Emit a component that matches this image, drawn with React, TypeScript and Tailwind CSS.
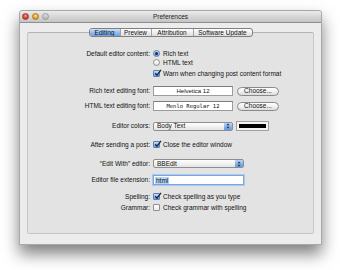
import React from "react";

const font = { fontFamily: '"Liberation Sans", Arial, sans-serif' };

function Radio({ on }: { on?: boolean }) {
  return (
    <span
      className={
        "inline-flex items-center justify-center w-[7px] h-[7px] rounded-full border shrink-0 " +
        (on
          ? "border-[#5a7fb8] bg-gradient-to-b from-[#c9defa] to-[#6b9fe0]"
          : "border-[#8e8e8e] bg-gradient-to-b from-[#ffffff] to-[#e6e6e6]")
      }
    >
      {on && <span className="w-[3px] h-[3px] rounded-full bg-[#1c2a44]" />}
    </span>
  );
}

function Check({ on }: { on?: boolean }) {
  return (
    <span
      className={
        "relative inline-flex items-center justify-center w-[7px] h-[7px] rounded-[1px] border shrink-0 " +
        (on
          ? "border-[#5a7fb8] bg-gradient-to-b from-[#c9defa] to-[#6b9fe0]"
          : "border-[#8e8e8e] bg-gradient-to-b from-[#ffffff] to-[#ececec]")
      }
    >
      {on && (
        <svg width="8" height="8" viewBox="0 0 8 8" className="absolute left-[0px] top-[-2px]">
          <path d="M1.2 4.2 L3 6.2 L7 0.8" stroke="#1a2536" strokeWidth="1.3" fill="none" />
        </svg>
      )}
    </span>
  );
}

function Field({ children, mono, w = "w-[80px]" }: { children?: React.ReactNode; mono?: boolean; w?: string }) {
  return (
    <div
      className={
        w +
        " h-[10px] bg-white border border-[#9c9c9c] border-t-[#7d7d7d] flex items-center justify-center text-[6px] text-[#111]"
      }
      style={mono ? { fontFamily: '"DejaVu Sans Mono", "Liberation Mono", monospace', fontSize: "5.5px" } : undefined}
    >
      {children}
    </div>
  );
}

function Button({ label }: { label: string }) {
  return (
    <div className="ml-[2px] w-[42px] h-[9px] rounded-full border border-[#8a8a8a] bg-gradient-to-b from-[#ffffff] via-[#f1f1f1] to-[#dcdcdc] flex items-center justify-center text-[6.5px] text-[#111]">
      {label}
    </div>
  );
}

function Popup({ label, w }: { label: string; w: string }) {
  return (
    <div className={w + " h-[9px] rounded-[2px] border border-[#8e8e8e] bg-gradient-to-b from-[#ffffff] to-[#e4e4e4] flex items-stretch"}>
      <div className="flex-1 flex items-center pl-[3px] text-[6.5px] text-[#111]">{label}</div>
      <div className="w-[8px] rounded-r-[1px] bg-gradient-to-b from-[#b9d4f7] to-[#5f97de] flex items-center justify-center">
        <svg width="4" height="6" viewBox="0 0 4 6">
          <path d="M0.5 2.3 L2 0.6 L3.5 2.3 Z M0.5 3.7 L2 5.4 L3.5 3.7 Z" fill="#1b2a45" />
        </svg>
      </div>
    </div>
  );
}

function Row({ label, children, h = "h-[9px]", mt }: { label?: string; children: React.ReactNode; h?: string; mt: string }) {
  return (
    <div className={"grid grid-cols-[122px_1fr] gap-x-[3px] items-center " + h + " " + mt}>
      <div className="text-right text-[6.5px] text-[#111] whitespace-nowrap">{label}</div>
      <div className="flex items-center gap-[2px] text-[6.5px] text-[#111] whitespace-nowrap">{children}</div>
    </div>
  );
}

export default function App() {
  const tabs = ["Editing", "Preview", "Attribution", "Software Update"];
  const tabW = ["w-[30px]", "w-[31px]", "w-[42px]", "w-[59px]"];
  return (
    <div className="w-[340px] h-[270px] bg-white overflow-hidden" style={font}>
      <div className="ml-[19px] mt-[10px] w-[303px] h-[235px] flex flex-col rounded-t-[3px] shadow-[0_9px_16px_rgba(0,0,0,0.5)] border border-[#a8a8a8] bg-[#ececec]">
        <div className="relative h-[12px] shrink-0 rounded-t-[3px] bg-gradient-to-b from-[#ebebeb] to-[#c4c4c4] border-b border-[#8f8f8f] flex items-center justify-center">
          <div className="absolute left-[2px] top-[2px] flex gap-[3px]">
            <span className="w-[7px] h-[7px] rounded-full bg-[radial-gradient(circle_at_50%_35%,#ff9a8a,#d8392c_60%,#9e2218)] border border-[#a0392f]" />
            <span className="w-[7px] h-[7px] rounded-full bg-[radial-gradient(circle_at_50%_35%,#ffe08a,#e6a12a_60%,#a66c14)] border border-[#b07a22]" />
            <span className="w-[7px] h-[7px] rounded-full bg-gradient-to-b from-[#e0e0e0] to-[#b4b4b4] border border-[#9a9a9a]" />
          </div>
          <span className="text-[6.5px] text-[#222]">Preferences</span>
        </div>
        <div className="flex-1 flex flex-col px-[7px] pb-[10px]">
          <div className="relative z-10 mt-[5px] self-center flex h-[9px] rounded-[3px] border border-[#7f7f7f] bg-gradient-to-b from-[#ffffff] to-[#dedede] overflow-hidden">
            {tabs.map((t, i) => (
              <div
                key={t}
                className={
                  tabW[i] +
                  " flex items-center justify-center text-[6.5px] text-[#111] " +
                  (i > 0 ? "border-l border-[#a3a3a3] " : "") +
                  (i === 0 ? "bg-gradient-to-b from-[#cfe2fa] via-[#93bdf0] to-[#6aa2e6]" : "")
                }
              >
                {t}
              </div>
            ))}
          </div>
          <div className="-mt-[5px] flex-1 border border-[#c6c6c6] border-t-[#b4b4b4] bg-[#e3e3e3] rounded-[2px] flex flex-col">
            <Row label="Default editor content:" mt="mt-[16px]">
              <Radio on /> <span className="ml-[1px]">Rich text</span>
            </Row>
            <Row mt="mt-[0px]">
              <Radio /> <span className="ml-[1px]">HTML text</span>
            </Row>
            <Row mt="mt-[2px]">
              <Check on /> <span className="ml-[1px]">Warn when changing post content format</span>
            </Row>
            <Row label="Rich text editing font:" h="h-[10px]" mt="mt-[8px]">
              <Field>Helvetica 12</Field>
              <Button label="Choose..." />
            </Row>
            <Row label="HTML text editing font:" h="h-[10px]" mt="mt-[5px]">
              <Field mono>Menlo Regular 12</Field>
              <Button label="Choose..." />
            </Row>
            <Row label="Editor colors:" h="h-[10px]" mt="mt-[10px]">
              <Popup label="Body Text" w="w-[80px]" />
              <div className="ml-[1px] w-[33px] h-[10px] border border-[#a0a0a0] bg-[#f4f4f4] p-[2px]">
                <div className="w-full h-full bg-black" />
              </div>
            </Row>
            <Row label="After sending a post:" mt="mt-[9px]">
              <Check on /> <span className="ml-[1px]">Close the editor window</span>
            </Row>
            <Row label={"\u201cEdit With\u201d editor:"} mt="mt-[10px]">
              <Popup label="BBEdit" w="w-[91px]" />
            </Row>
            <Row label="Editor file extension:" h="h-[10px]" mt="mt-[7px]">
              <div className="w-[91px] h-[10px] bg-white border border-[#7ba6de] shadow-[0_0_0_1px_#a9c9f0] flex items-center pl-[1px]">
                <span className="bg-[#b5d4fb] text-[6.5px] leading-[7px] px-[1px] text-[#111]">html</span>
              </div>
            </Row>
            <Row label="Spelling:" mt="mt-[7px]">
              <Check on /> <span className="ml-[1px]">Check spelling as you type</span>
            </Row>
            <Row label="Grammar:" mt="mt-[2px]">
              <Check /> <span className="ml-[1px]">Check grammar with spelling</span>
            </Row>
          </div>
        </div>
      </div>
    </div>
  );
}
